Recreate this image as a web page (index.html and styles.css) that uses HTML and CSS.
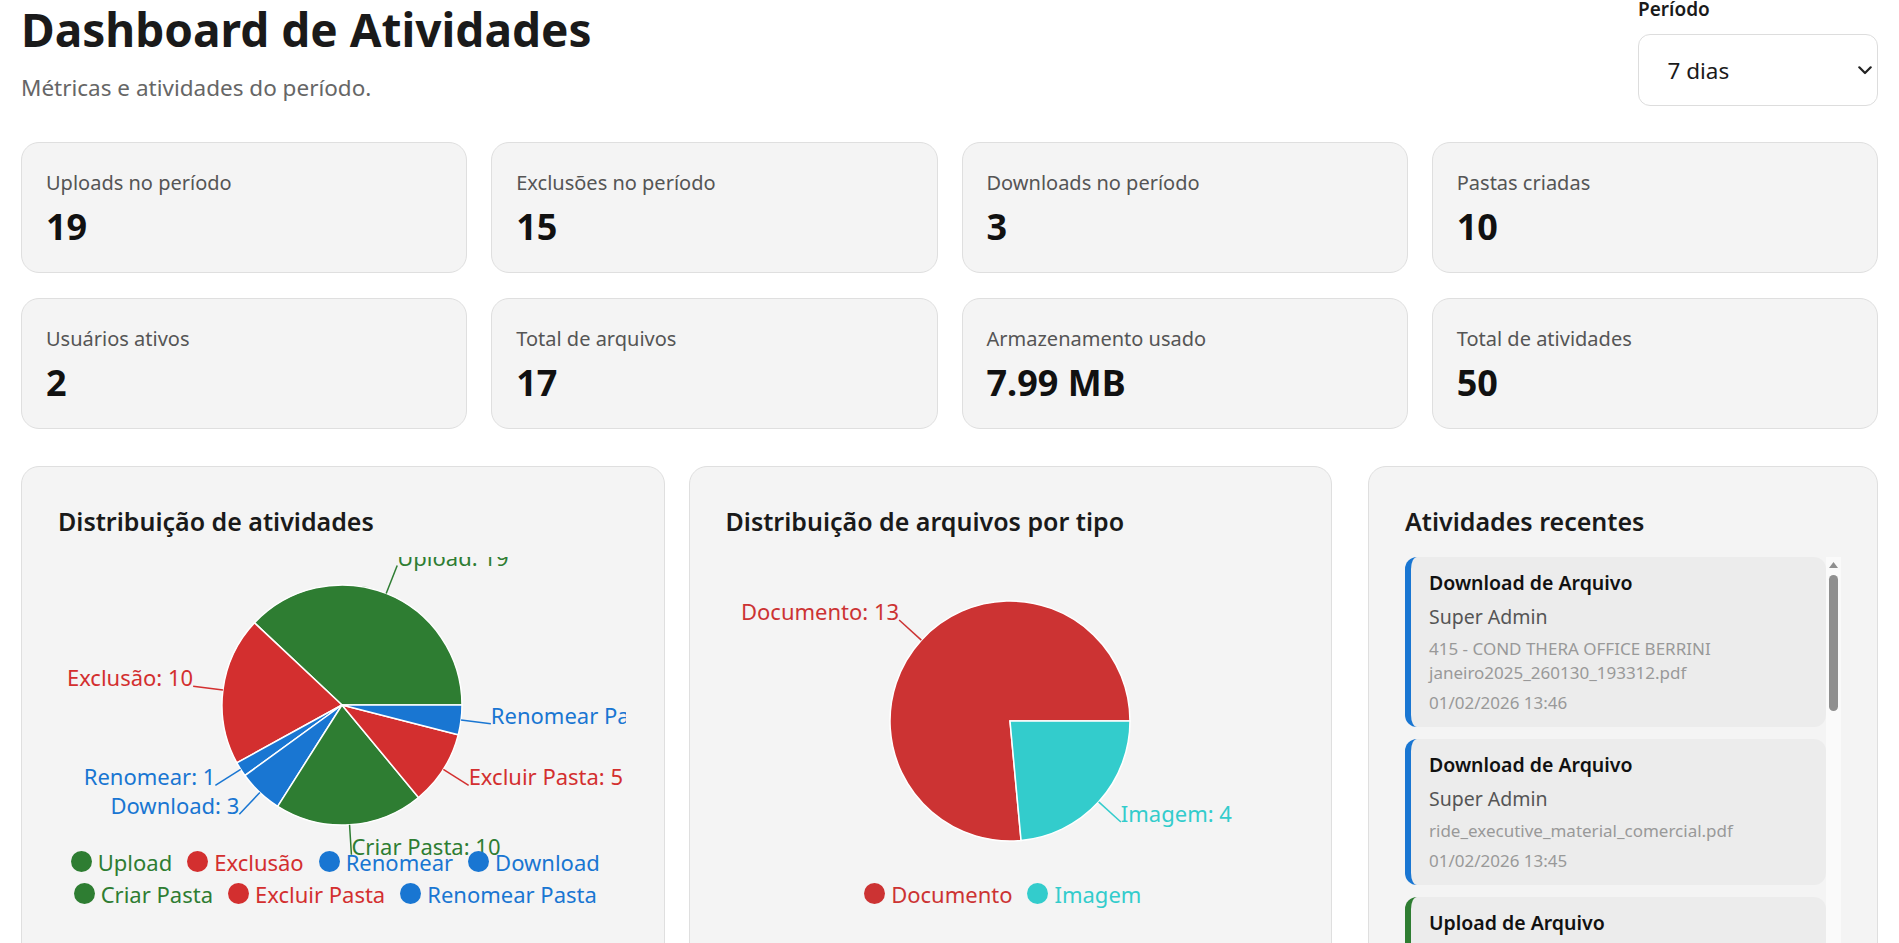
FILE: index.html
```html
<!DOCTYPE html>
<html lang="pt-BR">
<head>
<meta charset="utf-8">
<title>Dashboard de Atividades</title>
<link rel="stylesheet" href="styles.css">
</head>
<body>
<main class="page">
  <header class="header">
    <div class="heading">
      <h1 class="title">Dashboard de Atividades</h1>
      <p class="subtitle">Métricas e atividades do período.</p>
    </div>
    <div class="period">
      <span class="period-label">Período</span>
      <div class="select">
        <span class="select-value">7 dias</span>
        <svg class="chevron" width="14" height="9" viewBox="0 0 14 9"><path d="M1.3 1.3 L7 7 L12.7 1.3" fill="none" stroke="#222" stroke-width="2.2" stroke-linecap="round" stroke-linejoin="round"/></svg>
      </div>
    </div>
  </header>

  <section class="stats">
    <div class="stat"><div class="stat-label">Uploads no período</div><div class="stat-value">19</div></div>
    <div class="stat"><div class="stat-label">Exclusões no período</div><div class="stat-value">15</div></div>
    <div class="stat"><div class="stat-label">Downloads no período</div><div class="stat-value">3</div></div>
    <div class="stat"><div class="stat-label">Pastas criadas</div><div class="stat-value">10</div></div>
    <div class="stat"><div class="stat-label">Usuários ativos</div><div class="stat-value">2</div></div>
    <div class="stat"><div class="stat-label">Total de arquivos</div><div class="stat-value">17</div></div>
    <div class="stat"><div class="stat-label">Armazenamento usado</div><div class="stat-value">7.99 MB</div></div>
    <div class="stat"><div class="stat-label">Total de atividades</div><div class="stat-value">50</div></div>
  </section>

  <section class="panels">
    <div class="charts">
      <article class="panel">
        <h3 class="panel-title">Distribuição de atividades</h3>
        <div class="chart">
          <svg class="chart-svg" width="568" height="360" viewBox="1 0 568 360">
            <g class="sectors">
              <path d="M285,148 L405,148 A120,120 0 0 0 197.52,65.86 Z" fill="#2e7d32"/>
              <path d="M285,148 L197.52,65.86 A120,120 0 0 0 179.84,205.82 Z" fill="#d32f2f"/>
              <path d="M285,148 L179.84,205.82 A120,120 0 0 0 187.92,218.53 Z" fill="#1976d2"/>
              <path d="M285,148 L187.92,218.53 A120,120 0 0 0 220.70,249.32 Z" fill="#1976d2"/>
              <path d="M285,148 L220.70,249.32 A120,120 0 0 0 361.49,240.46 Z" fill="#2e7d32"/>
              <path d="M285,148 L361.49,240.46 A120,120 0 0 0 401.23,177.84 Z" fill="#d32f2f"/>
              <path d="M285,148 L401.23,177.84 A120,120 0 0 0 405,148 Z" fill="#1976d2"/>
            </g>
            <g class="label-lines">
              <path d="M329.17,36.42 L340.22,8.53" stroke="#2e7d32"/>
              <path d="M165.95,132.96 L136.18,129.2" stroke="#d32f2f"/>
              <path d="M183.68,212.30 L158.35,228.37" stroke="#1976d2"/>
              <path d="M202.86,235.48 L182.32,257.35" stroke="#1976d2"/>
              <path d="M292.54,267.76 L294.42,297.7" stroke="#2e7d32"/>
              <path d="M386.32,212.30 L411.65,228.37" stroke="#d32f2f"/>
              <path d="M404.05,163.04 L433.82,166.8" stroke="#1976d2"/>
            </g>
            <g class="pie-labels">
              <text x="340.22" y="8.53" text-anchor="start" fill="#2e7d32">Upload: 19</text>
              <text x="136.18" y="129.2" text-anchor="end" fill="#d32f2f">Exclusão: 10</text>
              <text x="158.35" y="228.37" text-anchor="end" fill="#1976d2">Renomear: 1</text>
              <text x="182.32" y="257.35" text-anchor="end" fill="#1976d2">Download: 3</text>
              <text x="294.42" y="297.7" text-anchor="start" fill="#2e7d32">Criar Pasta: 10</text>
              <text x="411.65" y="228.37" text-anchor="start" fill="#d32f2f">Excluir Pasta: 5</text>
              <text x="433.82" y="166.8" text-anchor="start" fill="#1976d2">Renomear Pasta: 2</text>
            </g>
          </svg>
          <div class="legend">
            <div class="legend-row">
              <span class="legend-item c-green"><svg class="legend-icon" viewBox="0 0 21 21"><circle cx="10.5" cy="10.5" r="10.5" fill="currentColor"/></svg>Upload</span>
              <span class="legend-item c-red"><svg class="legend-icon" viewBox="0 0 21 21"><circle cx="10.5" cy="10.5" r="10.5" fill="currentColor"/></svg>Exclusão</span>
              <span class="legend-item c-blue"><svg class="legend-icon" viewBox="0 0 21 21"><circle cx="10.5" cy="10.5" r="10.5" fill="currentColor"/></svg>Renomear</span>
              <span class="legend-item c-blue"><svg class="legend-icon" viewBox="0 0 21 21"><circle cx="10.5" cy="10.5" r="10.5" fill="currentColor"/></svg>Download</span>
            </div>
            <div class="legend-row">
              <span class="legend-item c-green"><svg class="legend-icon" viewBox="0 0 21 21"><circle cx="10.5" cy="10.5" r="10.5" fill="currentColor"/></svg>Criar Pasta</span>
              <span class="legend-item c-red"><svg class="legend-icon" viewBox="0 0 21 21"><circle cx="10.5" cy="10.5" r="10.5" fill="currentColor"/></svg>Excluir Pasta</span>
              <span class="legend-item c-blue"><svg class="legend-icon" viewBox="0 0 21 21"><circle cx="10.5" cy="10.5" r="10.5" fill="currentColor"/></svg>Renomear Pasta</span>
            </div>
          </div>
        </div>
      </article>

      <article class="panel">
        <h3 class="panel-title">Distribuição de arquivos por tipo</h3>
        <div class="chart">
          <svg class="chart-svg" width="568" height="360" viewBox="1 0 568 360">
            <g class="sectors">
              <path d="M285,164 L405,164 A120,120 0 1 0 296.07,283.49 Z" fill="#cc3333"/>
              <path d="M285,164 L296.07,283.49 A120,120 0 0 0 405,164 Z" fill="#33cccc"/>
            </g>
            <g class="label-lines">
              <path d="M196.32,83.16 L174.15,62.95" stroke="#cc3333"/>
              <path d="M373.68,244.84 L395.85,265.05" stroke="#33cccc"/>
            </g>
            <g class="pie-labels">
              <text x="174.15" y="62.95" text-anchor="end" fill="#cc3333">Documento: 13</text>
              <text x="395.85" y="265.05" text-anchor="start" fill="#33cccc">Imagem: 4</text>
            </g>
          </svg>
          <div class="legend">
            <div class="legend-row">
              <span class="legend-item c-doc"><svg class="legend-icon" viewBox="0 0 21 21"><circle cx="10.5" cy="10.5" r="10.5" fill="currentColor"/></svg>Documento</span>
              <span class="legend-item c-img"><svg class="legend-icon" viewBox="0 0 21 21"><circle cx="10.5" cy="10.5" r="10.5" fill="currentColor"/></svg>Imagem</span>
            </div>
          </div>
        </div>
      </article>
    </div>

    <article class="panel panel-recent">
      <h3 class="panel-title">Atividades recentes</h3>
      <div class="feed-box">
        <div class="feed">
          <div class="activity">
            <div class="activity-title">Download de Arquivo</div>
            <div class="activity-user">Super Admin</div>
            <div class="activity-file">415 - COND THERA OFFICE BERRINI janeiro2025_260130_193312.pdf</div>
            <div class="activity-date">01/02/2026 13:46</div>
          </div>
          <div class="activity">
            <div class="activity-title">Download de Arquivo</div>
            <div class="activity-user">Super Admin</div>
            <div class="activity-file">ride_executive_material_comercial.pdf</div>
            <div class="activity-date">01/02/2026 13:45</div>
          </div>
          <div class="activity a-green">
            <div class="activity-title">Upload de Arquivo</div>
            <div class="activity-user">Super Admin</div>
            <div class="activity-file">ride_executive_material_comercial.pdf</div>
            <div class="activity-date">01/02/2026 13:44</div>
          </div>
          <div class="activity a-red">
            <div class="activity-title">Exclusão de Arquivo</div>
            <div class="activity-user">Super Admin</div>
            <div class="activity-file">documento_antigo.pdf</div>
            <div class="activity-date">01/02/2026 13:40</div>
          </div>
        </div>
        <div class="scrollbar">
          <svg class="sb-arrow" width="9" height="6" viewBox="0 0 9 6"><path d="M4.5 0 L9 6 L0 6 Z" fill="#8f8f8f"/></svg>
          <div class="sb-thumb"></div>
        </div>
      </div>
    </article>
  </section>
</main>
</body>
</html>
```

FILE: styles.css
```css
* {
  box-sizing: border-box;
}

html,
body {
  margin: 0;
  padding: 0;
  overflow: hidden;
  background: #ffffff;
}

body {
  font-family: "Noto Sans", "Open Sans", sans-serif;
  color: #1a1a1a;
}

.page {
  width: 1899px;
  padding: 0 21px;
}

/* Header */
.header {
  display: flex;
  justify-content: space-between;
  align-items: flex-start;
  margin-top: -4px;
}

.title {
  margin: 1px 0 0;
  font-size: 46px;
  line-height: 64px;
  font-weight: 700;
  color: #1a1a1a;
}

.subtitle {
  margin: 11px 0 0;
  font-size: 22.5px;
  line-height: 32px;
  color: #666666;
}

.period {
  display: flex;
  flex-direction: column;
  width: 240px;
}

.period-label {
  font-size: 19px;
  line-height: 26px;
  font-weight: 600;
  color: #1a1a1a;
}

.select {
  margin-top: 12px;
  height: 72px;
  border: 1.5px solid #dddddd;
  border-radius: 12px;
  background: #ffffff;
  display: flex;
  align-items: center;
  justify-content: space-between;
  padding: 2px 5px 0 28.5px;
}

.select-value {
  font-size: 22.5px;
  line-height: 32px;
  color: #1a1a1a;
}

.chevron {
  display: block;
  margin-top: -2px;
}

/* Stat cards */
.stats {
  display: grid;
  grid-template-columns: repeat(4, 1fr);
  column-gap: 24px;
  row-gap: 25px;
  margin-top: 36px;
}

.stat {
  height: 131px;
  background: #f4f4f4;
  border: 1.5px solid #dfdfdf;
  border-radius: 18px;
  padding: 25px 24px 19px;
}

.stat-label {
  font-size: 20px;
  line-height: 30px;
  color: #555555;
}

.stat-value {
  margin-top: 4px;
  font-size: 36px;
  line-height: 50px;
  font-weight: 700;
  color: #111111;
}

/* Panels */
.panels {
  display: grid;
  grid-template-columns: 1fr 510px;
  gap: 36px;
  margin-top: 37px;
}

.charts {
  display: grid;
  grid-template-columns: 1fr 1fr;
  gap: 24px;
}

.panel {
  background: #f4f4f4;
  border: 1.5px solid #dfdfdf;
  border-radius: 18px;
  padding: 36px;
}

.panel-title {
  margin: 0 0 18px;
  font-size: 25px;
  line-height: 36px;
  font-weight: 600;
  color: #1a1a1a;
}

.chart {
  position: relative;
  height: 360px;
}

.chart-svg {
  display: block;
  overflow: hidden;
}

.sectors path {
  stroke: #ffffff;
  stroke-width: 1.5;
}

.label-lines path {
  fill: none;
  stroke-width: 1.5;
}

.pie-labels text {
  font-size: 22px;
}

.legend {
  position: absolute;
  left: 7.5px;
  right: 7.5px;
  bottom: 7.5px;
}

.legend-row {
  display: flex;
  justify-content: center;
}

.legend-item {
  display: flex;
  align-items: center;
  margin-right: 15px;
  font-size: 22px;
  line-height: 32px;
  white-space: nowrap;
}

.legend-icon {
  display: block;
  width: 21px;
  height: 21px;
  margin-right: 6px;
}

.c-green { color: #2e7d32; }
.c-red { color: #d32f2f; }
.c-blue { color: #1976d2; }
.c-doc { color: #cc3333; }
.c-img { color: #33cccc; }

/* Recent activities */
.feed-box {
  display: flex;
  height: 420px;
}

.feed {
  flex: 1;
  overflow: hidden;
}

.activity {
  background: #ececec;
  border-left: 6px solid #1976d2;
  border-radius: 12px;
  padding: 12px 18px;
  margin-bottom: 12px;
}

.a-green { border-left-color: #2e7d32; }
.a-red { border-left-color: #d32f2f; }

.activity-title {
  font-size: 19.5px;
  line-height: 28px;
  font-weight: 600;
  color: #111111;
}

.activity-user {
  margin-top: 6px;
  font-size: 19.5px;
  line-height: 28px;
  color: #555555;
}

.activity-file {
  margin-top: 6px;
  font-size: 17px;
  line-height: 24px;
  color: #999999;
}

.activity-date {
  margin-top: 6px;
  font-size: 17px;
  line-height: 24px;
  color: #999999;
}

.scrollbar {
  width: 15px;
  background: #fafafa;
  display: flex;
  flex-direction: column;
  align-items: center;
  padding-top: 5px;
}

.sb-arrow {
  display: block;
}

.sb-thumb {
  margin-top: 7px;
  width: 9px;
  height: 136px;
  border-radius: 4.5px;
  background: #8f8f8f;
}
```
